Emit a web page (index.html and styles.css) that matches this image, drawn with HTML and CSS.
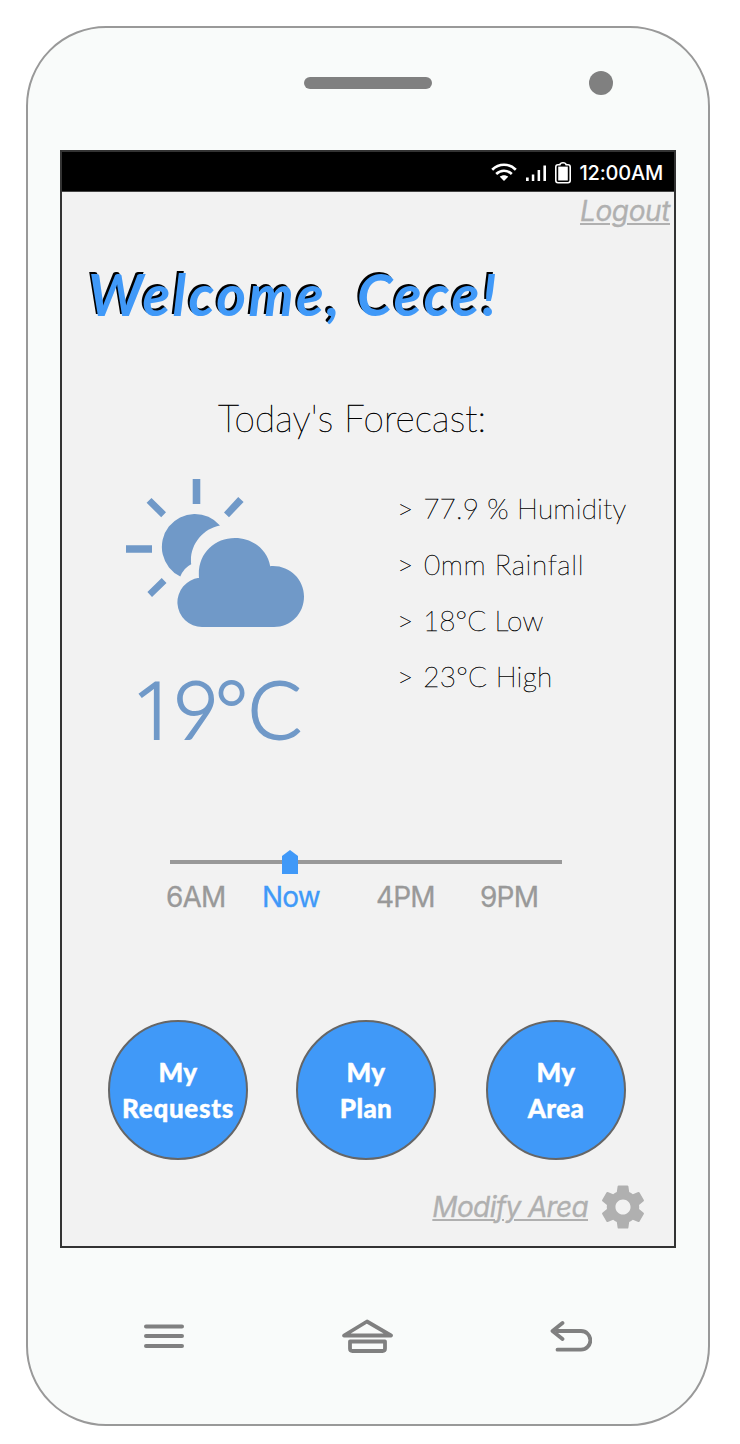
FILE: index.html
```html
<!DOCTYPE html>
<html lang="en">
<head>
<meta charset="utf-8">
<title>Today's Forecast</title>
<link rel="stylesheet" href="styles.css">
</head>
<body>
<div class="phone">
  <header class="phone-top">
    <span class="speaker"></span>
    <span class="camera"></span>
  </header>
  <main class="screen">
    <div class="status-bar">
      <svg class="wifi" width="26" height="20" viewBox="0 0 26 20" fill="none" stroke="#fff" stroke-width="2.7">
        <path d="M1.2 6.700C8 .1 18 .1 24.800 6.700"/>
        <path d="M5.200 10.900C9.800 6.700 16.200 6.700 20.800 10.900"/>
        <path d="M8.800 13.700C11.300 11.700 14.700 11.700 17.200 13.700L13 18.100z" fill="#fff" stroke="none"/>
      </svg>
      <svg class="signal" width="22" height="20" viewBox="0 0 22 20" fill="#fff">
        <path d="M1 14.500h2.700V18H1zM6.800 11.500h2.500V18H6.800zM12.600 7h2.500v11h-2.500zM18.400 2.500h2.600V18h-2.600z"/>
      </svg>
      <svg class="battery" width="16" height="22" viewBox="0 0 16 22" fill="none" stroke="#fff" stroke-width="1.600">
        <path d="M3 2.800h1.800Q5.300.8 8 .8t3.200 2H13q2.200 0 2.200 2.200v13.500q0 2.200-2.200 2.200H3Q.8 20.700.8 18.500V5Q.8 2.800 3 2.800z"/>
        <path d="M3.200 4.600h9.600v13.900H3.200z" fill="#fff" stroke="none"/>
      </svg>
      <span class="clock">12:00AM</span>
    </div>
    <a class="link logout">Logout</a>
    <h1 class="welcome">Welcome, Cece!</h1>
    <h2 class="forecast-title">Today's Forecast:</h2>
    <section class="weather">
      <div class="current">
        <svg class="weather-icon" width="180" height="150" viewBox="0 0 180 150" fill="#7099c8">
          <path d="M66.700 1h7.600v25h-7.600zM0 67.300h26v7.500H0zM20.600 24.800l4.900-4.800L40 34.200l-4.800 5zM112.200 19l5.400 5L103 39.200l-5-4.700zM35.700 100l4.800 5L26 119l-4.600-5z"/>
          <path d="M94 47.500A33 33 0 1 0 54.300 98.500Q57.800 89.800 65.200 86.200C63 68 76 50.800 94 47.500z"/>
          <path d="M73 100C71 76 88 60 109 60C127 60 141.500 72 144.200 88.200C163 86.700 178 101 178 118.500C178 136 164.500 149 148 149H76A24.700 24.700 0 0 1 73 99.800z"/>
        </svg>
        <div class="temp"><span class="digit-one">1</span>9<span class="degree">°</span>C</div>
      </div>
      <div class="details">
        <div class="humidity"><span class="bullet">&gt;</span> 77.9 % Humidity</div>
        <div class="rainfall"><span class="bullet">&gt;</span> 0mm Rainfall</div>
        <div class="low"><span class="bullet">&gt;</span> 18°C Low</div>
        <div class="high"><span class="bullet">&gt;</span> 23°C High</div>
      </div>
    </section>
    <section class="timeline">
      <div class="track"><svg class="marker" width="16" height="24" viewBox="0 0 16 24"><path d="M0 6L8 0l8 6v18H0z" fill="#4099f8"/></svg></div>
      <div class="hours">
        <span>6AM</span><span class="now">Now</span><span>4PM</span><span>9PM</span>
      </div>
    </section>
    <nav class="actions">
      <button class="action">My<br><span class="requests">Requests</span></button>
      <button class="action">My<br>Plan</button>
      <button class="action">My<br>Area</button>
    </nav>
    <footer class="modify">
      <a class="link modify-link">Modify Area</a>
      <svg width="44" height="44" viewBox="1.810 1.810 20.380 20.380" fill="#b0b0b0"><path d="M19.430 12.980c.04-.32.07-.64.07-.98s-.03-.66-.07-.98l2.110-1.650c.19-.15.24-.42.12-.64l-2-3.460c-.12-.22-.39-.3-.61-.22l-2.490 1c-.52-.4-1.080-.73-1.690-.98l-.38-2.650C14.460 2.180 14.250 2 14 2h-4c-.25 0-.46.18-.49.42l-.38 2.650c-.61.25-1.170.59-1.690.98l-2.490-1c-.23-.09-.49 0-.61.22l-2 3.460c-.13.22-.07.49.12.64l2.110 1.650c-.04.32-.07.65-.07.98s.03.66.07.98l-2.110 1.650c-.19.15-.24.42-.12.64l2 3.460c.12.22.39.3.61.22l2.490-1c.52.4 1.080.73 1.690.98l.38 2.650c.03.24.24.42.49.42h4c.25 0 .46-.18.49-.42l.38-2.650c.61-.25 1.170-.59 1.690-.98l2.490 1c.23.09.49 0 .61-.22l2-3.460c.12-.22.07-.49-.12-.64l-2.110-1.650zM12 15.500c-1.930 0-3.500-1.570-3.500-3.500s1.570-3.500 3.500-3.500 3.500 1.570 3.500 3.500-1.570 3.500-3.500 3.500z"/></svg>
    </footer>
  </main>
  <div class="phone-keys">
    <svg width="40" height="36" viewBox="0 0 40 36" fill="none" stroke="#808080" stroke-width="4" stroke-linecap="round"><path d="M2 8.500h36M2 18h36M2 28h36"/></svg>
    <svg width="52" height="36" viewBox="-1 0 52 36" fill="none" stroke="#808080" stroke-width="3.800" stroke-linejoin="round"><path d="M25 3.500L49 17.500H2z"/><path d="M8 23.500h35v7q0 2.500-2.500 2.500h-30Q8 33 8 30.500z"/></svg>
    <svg width="42" height="36" viewBox="0 0 42 36" fill="none" stroke="#808080" stroke-width="3.800" stroke-linecap="round" stroke-linejoin="round"><path d="M12.500 5L2.500 13l10 8M7.500 13h23.500a9.300 9.300 0 0 1 0 18.700H7.500"/></svg>
  </div>
</div>
</body>
</html>
```
FILE: styles.css
```css
* { box-sizing: border-box; }
body {
  margin: 0;
  padding: 26px;
  background: #fff;
  font-family: Inter, "Liberation Sans", sans-serif;
}
svg { display: block; }
.phone {
  width: 684px;
  height: 1400px;
  padding: 0 32px;
  border: 2px solid #999;
  border-radius: 80px;
  background: #f9fbfa;
}
.phone-top {
  display: flex;
  justify-content: flex-end;
  align-items: center;
  gap: 157px;
  height: 122px;
  padding: 0 63px 12px 0;
}
.speaker { width: 128px; height: 12px; border-radius: 6px; background: #808080; }
.camera { width: 24px; height: 24px; border-radius: 50%; background: #808080; }
.screen {
  display: flex;
  flex-direction: column;
  width: 616px;
  height: 1098px;
  border: 2px solid #333;
  background: #f2f2f2;
}
.status-bar {
  display: flex;
  align-items: center;
  justify-content: flex-end;
  height: 40px;
  padding: 2px 11px 0 0;
  border-bottom: 1px solid #444;
  background: #000;
}
.signal { margin-left: 8px; }
.battery { margin-left: 8px; }
.clock {
  margin-left: 8px;
  color: #fff;
  font-size: 20px;
  font-weight: 500;
  letter-spacing: -0.2px;
}
.link {
  color: #b0b0b0;
  font-size: 28px;
  font-style: italic;
  line-height: 34px;
  text-decoration: underline;
  text-decoration-thickness: 2px;
  text-underline-offset: 2px;
  -webkit-text-stroke: 0.3px #b0b0b0;
}
.logout { align-self: flex-end; margin: 2px 4px 0 0; letter-spacing: -0.4px; }
.modify-link { letter-spacing: -0.65px; }
.welcome {
  margin: 32px 0 0 26px;
  color: #4099f8;
  font: italic 700 57px/68px Lato, sans-serif;
  letter-spacing: 2.4px;
  text-shadow: -2px -2px 0 #000;
}
.forecast-title {
  margin: 68px 0 0 156px;
  color: #000;
  font: 100 37px/44px Lato, sans-serif;
  letter-spacing: 0.1px;
  -webkit-text-stroke: 0.5px #000;
}
.weather { display: flex; height: 318px; margin-top: 38px; padding-left: 64px; }
.current { width: 271px; }
.temp {
  margin: 31px 0 0 6px;
  color: #7099c8;
  font: 300 80px/98px Lato, sans-serif;
  letter-spacing: -4px;
  white-space: nowrap;
  -webkit-text-stroke: 1.8px #7099c8;
}
.digit-one { font-family: "Open Sans", sans-serif; line-height: 1; letter-spacing: -5px; }
.degree { letter-spacing: -0.500px; }
.details {
  padding-top: 2px;
  color: #000;
  font: 100 28px/56px Lato, sans-serif;
  white-space: nowrap;
  -webkit-text-stroke: 0.4px #000;
}
.bullet { margin-right: 1.500px; }
.humidity { letter-spacing: 0.2px; }
.rainfall { letter-spacing: 0.6px; }
.low { letter-spacing: 0.1px; }
.high { letter-spacing: 0.25px; }
.timeline { margin-top: 64px; padding-left: 108px; }
.track { width: 392px; height: 4px; background: #999; }
.marker { position: absolute; left: 282px; top: 850px; }
.hours {
  display: grid;
  grid-template-columns: 96px 114px 104px 80px;
  margin: 16px 0 0 -4px;
  color: #999;
  font-size: 28px;
  line-height: 34px;
  letter-spacing: -0.8px;
  -webkit-text-stroke: 0.3px;
}
.now { color: #4099f8; }
.actions {
  display: grid;
  grid-template-columns: 188px 190px 140px;
  margin: 106px 0 0 46px;
}
.action {
  width: 140px;
  height: 140px;
  padding: 0;
  border: 2px solid #666;
  border-radius: 50%;
  background: #4099f8;
  color: #fff;
  font: 900 26px/36px Lato, sans-serif;
  letter-spacing: 0.4px;
  -webkit-text-stroke: 0.4px #fff;
}
.requests { letter-spacing: 0.7px; }
.modify {
  display: flex;
  justify-content: flex-end;
  align-items: center;
  gap: 13px;
  margin: 25px 29px 0 0;
}
.phone-keys {
  display: flex;
  justify-content: space-between;
  padding: 70px 84px 0;
}
```
